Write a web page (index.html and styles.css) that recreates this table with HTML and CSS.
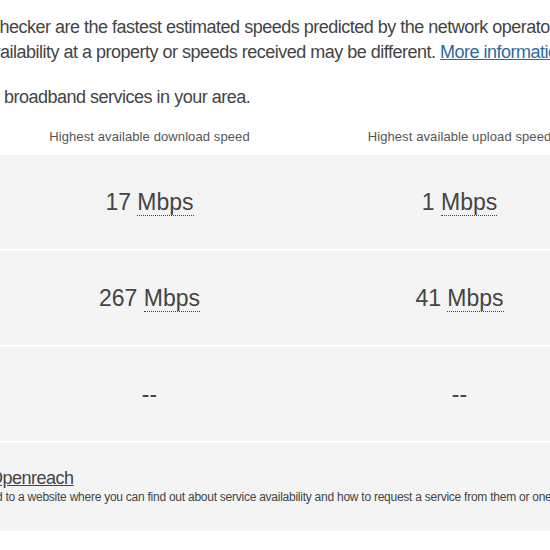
FILE: index.html
```html
<!DOCTYPE html>
<html lang="en-GB">
<head>
<meta charset="UTF-8">
<meta name="viewport" content="width=device-width, initial-scale=1.0">
<title>Broadband checker results</title>
<link rel="stylesheet" href="styles.css">
</head>
<body>
  <div class="page">
    <div class="intro">
      <p>
        <span class="line line-1">checker are the fastest estimated speeds predicted by the network operators providing</span>
        <span class="line line-2">availability at a property or speeds received may be different. <a href="#" class="info-link">More information</a></span>
      </p>
      <p>
        <span class="line line-3">the broadband services in your area.</span>
      </p>
    </div>

    <div class="results">
      <div class="results-head">
        <div class="col">Highest available download speed</div>
        <div class="col">Highest available upload speed</div>
      </div>
      <div class="results-row">
        <div class="col speed">17 <abbr title="Megabits per second">Mbps</abbr></div>
        <div class="col speed">1 <abbr title="Megabits per second">Mbps</abbr></div>
      </div>
      <div class="results-row">
        <div class="col speed">267 <abbr title="Megabits per second">Mbps</abbr></div>
        <div class="col speed">41 <abbr title="Megabits per second">Mbps</abbr></div>
      </div>
      <div class="results-row">
        <div class="col speed">--</div>
        <div class="col speed">--</div>
      </div>
      <div class="provider-row">
        <a href="#" class="provider-link">Openreach</a>
        <span class="provider-note">d to a website where you can find out about service availability and how to request a service from them or one of their providers.</span>
      </div>
    </div>
  </div>
</body>
</html>
```

FILE: styles.css
```css
body {
  margin: 0;
  background-color: #ffffff;
  color: #444444;
  font-family: "Liberation Sans", Arial, sans-serif;
  overflow: hidden;
}

.page {
  width: 550px;
  overflow: hidden;
}

.intro {
  padding-top: 15px;
  font-size: 18px;
  line-height: 25px;
  letter-spacing: -0.5px;
}

.intro p {
  margin: 0 0 20px 0;
}

.intro p:last-child {
  margin-bottom: 0;
}

.line {
  display: block;
  white-space: nowrap;
}

.line-1 {
  text-indent: -9px;
}

.line-2 {
  text-indent: -18px;
}

.line-3 {
  text-indent: -24px;
}

.info-link {
  color: #2f6a9c;
}

.results {
  margin-top: 18px;
}

.results-head,
.results-row {
  display: grid;
  grid-template-columns: 311px 309px;
  margin-left: -6px;
  width: 620px;
}

.results-head {
  font-size: 13px;
  line-height: 18px;
  letter-spacing: 0.1px;
  color: #555555;
  padding-bottom: 9px;
}

.col {
  text-align: center;
}

.results-row {
  height: 94px;
  margin-bottom: 2px;
  background-color: #f4f4f4;
  align-items: center;
}

.speed {
  font-size: 23px;
  line-height: 28px;
}

abbr {
  text-decoration: none;
  border-bottom: 1px dotted #444444;
}

.provider-row {
  height: 88px;
  box-sizing: border-box;
  padding-top: 25px;
  background-color: #f4f4f4;
  white-space: nowrap;
}

.provider-link {
  display: block;
  color: #444444;
  font-size: 18px;
  line-height: 20px;
  letter-spacing: -0.5px;
  text-indent: -11px;
}

.provider-note {
  display: block;
  margin-top: 2px;
  font-size: 12px;
  line-height: 14px;
  letter-spacing: -0.25px;
  text-indent: -4px;
}
```
